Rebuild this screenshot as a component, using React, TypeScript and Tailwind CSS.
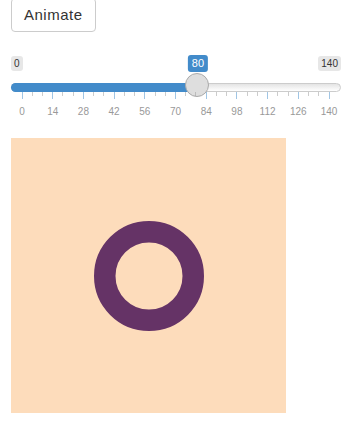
import React from "react";

const MIN = 0;
const MAX = 140;
const VALUE = 80;
const SPAN = 307; // px between 0 and 140
const OFFSET = 11; // inset of the scale inside the slider

function pos(v: number) {
  return OFFSET + ((v - MIN) / (MAX - MIN)) * SPAN;
}

export default function App() {
  const majors = Array.from({ length: 11 }, (_, i) => i * 14);
  const minors: number[] = [];
  for (let i = 0; i < 10; i++) {
    minors.push(i * 14 + 14 / 3, i * 14 + 28 / 3);
  }
  const thumbX = pos(VALUE);

  return (
    <div
      className="flex flex-col items-start px-[11px] bg-white w-[351px] h-[442px] overflow-hidden"
      style={{ fontFamily: '"Liberation Sans", Arial, sans-serif' }}
    >
      <button className="-mt-[2px] h-[34px] px-[12px] border border-[#cccccc] rounded-[4px] bg-white text-[15px] tracking-[0.5px] text-[#333333] leading-[20px]">
        Animate
      </button>

      {/* slider */}
      <div className="mt-[23px] w-[330px] h-[83px] flex flex-col">
        <div className="relative h-[17px] flex justify-between items-start pt-[1px]">
          <span className="px-[3px] py-[1px] rounded-[3px] bg-[#e7e7e7] text-[10px] leading-[13px] text-[#333333]">
            0
          </span>
          <span className="px-[3px] py-[1px] rounded-[3px] bg-[#e7e7e7] text-[10px] leading-[13px] text-[#333333]">
            140
          </span>
          <span
            className="absolute top-0 -translate-x-1/2 px-[4px] py-[1px] rounded-[3px] bg-[#428bca] text-[11px] leading-[15px] text-white"
            style={{ left: thumbX + 0.5 }}
          >
            {VALUE}
          </span>
        </div>

        <div className="relative mt-[11px] h-[9px] rounded-full border border-[#cccccc] bg-linear-to-b from-[#e4e4e4] to-white">
          <div className="-m-px h-[9px] rounded-l-full bg-[#428bca]" style={{ width: thumbX }} />
          <div
            className="absolute -top-[11px] w-[24px] h-[24px] -translate-x-1/2 rounded-full border border-[#aaaaaa] bg-[#dedede]"
            style={{ left: thumbX - 1 }}
          />
        </div>

        <div className="relative h-[7px]">
          {majors.map((v) => (
            <div
              key={"M" + v}
              className="absolute top-0 w-px h-[7px] bg-[#428bca] opacity-50"
              style={{ left: pos(v) - 0.5 }}
            />
          ))}
          {minors.map((v, i) => (
            <div
              key={"m" + i}
              className="absolute top-0 w-px h-[4px] bg-[#999999] opacity-50"
              style={{ left: pos(v) - 0.5 }}
            />
          ))}
        </div>

        <div className="relative mt-[7px] h-[12px]">
          {majors.map((v) => (
            <span
              key={"t" + v}
              className="absolute top-0 -translate-x-1/2 text-[10px] leading-[12px] text-[#999999]"
              style={{ left: pos(v) }}
            >
              {v}
            </span>
          ))}
        </div>
      </div>

      <div className="w-[275px] h-[275px] bg-[#fddcbb] flex items-center justify-center">
        <svg width="112" height="112" viewBox="0 0 112 112">
          <circle cx="56" cy="56" r="44.25" fill="none" stroke="#653366" strokeWidth="21.5" />
        </svg>
      </div>
    </div>
  );
}
